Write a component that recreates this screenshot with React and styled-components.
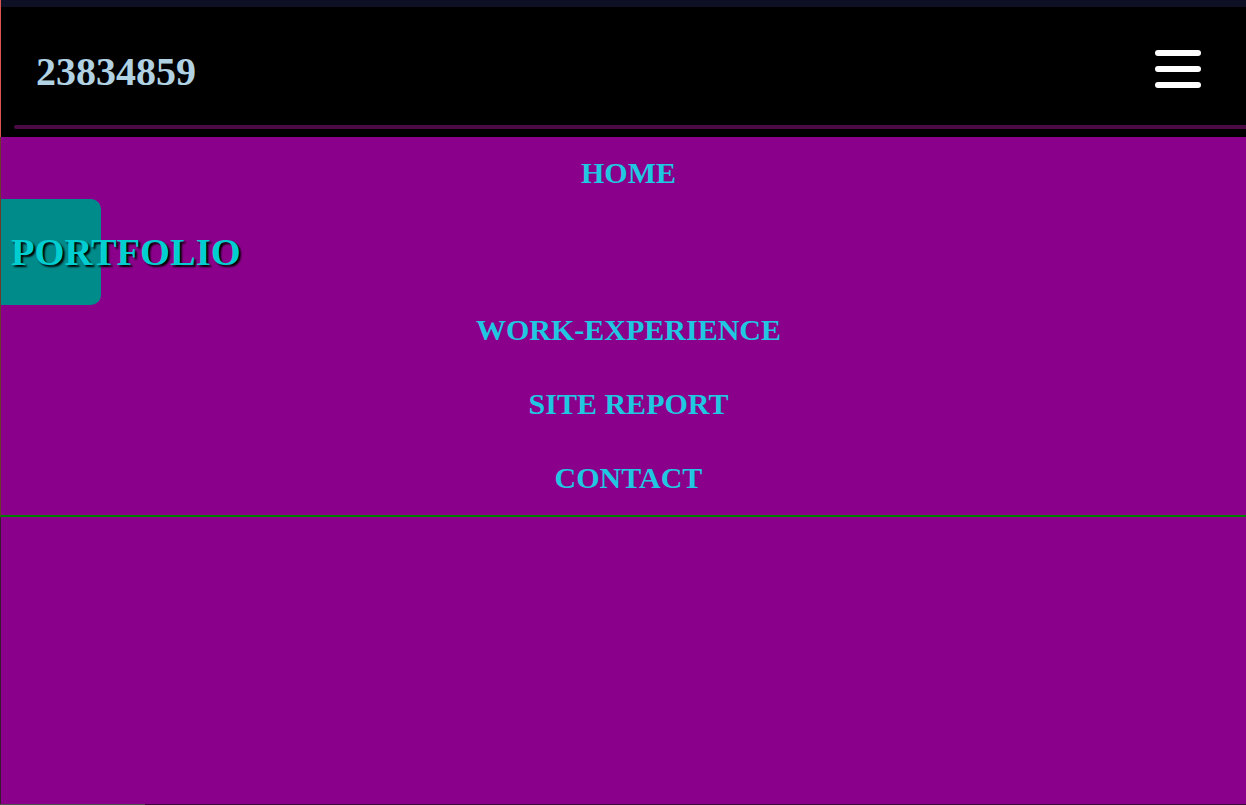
import React from "react";
import styled, { createGlobalStyle } from "styled-components";

const Global = createGlobalStyle`
  html, body { margin: 0; padding: 0; }
  body {
    background: #8b008b;
    font-family: "Liberation Serif", "Times New Roman", serif;
    overflow: hidden;
  }
  * { box-sizing: border-box; }
`;

const Page = styled.div`
  min-height: 805px;
  display: flex;
  flex-direction: column;
  background: #8b008b;
`;

const TopStrip = styled.div`
  height: 7px;
  background: #0e1126;
  border-left: 1px solid #d9534f;
`;

const Header = styled.header`
  background: #000;
  border-left: 1px solid #d9534f;
  padding-bottom: 8px;
`;

const HeaderRow = styled.div`
  display: flex;
  justify-content: space-between;
  align-items: flex-start;
  padding: 43px 45px 31px 35px;
`;

const Title = styled.h1`
  margin: 0;
  font-size: 40px;
  line-height: 44px;
  font-weight: bold;
  color: #b0d2e2;
`;

const Burger = styled.button`
  display: flex;
  flex-direction: column;
  gap: 10px;
  padding: 0;
  border: 0;
  background: none;
  cursor: pointer;
`;

const Bar = styled.span`
  display: block;
  width: 46px;
  height: 6px;
  border-radius: 3px;
  background: #fff;
`;

const Rule = styled.div`
  height: 4px;
  margin-left: 13px;
  background: #4b0c46;
  border-radius: 2px 0 0 2px;
`;

const Nav = styled.nav`
  display: flex;
  flex-direction: column;
  padding-bottom: 12px;
  border-left: 1px solid #6b3a2a;
  border-bottom: 2px solid #008000;
`;

const Item = styled.div`
  height: ${(p) => p.$h}px;
  margin-top: ${(p) => p.$mt || 0}px;
  padding-top: ${(p) => p.$pt || 0}px;
  padding-left: 10px;
  display: flex;
  align-items: center;
  justify-content: center;
`;

const Link = styled.a`
  font-size: 30px;
  font-weight: bold;
  color: #1fc7e1;
  text-decoration: none;
  white-space: nowrap;
`;

const ActiveItem = styled.div`
  height: 106px;
  width: 100px;
  display: flex;
  align-items: center;
  padding-left: 10px;
  background: #008b8b;
  border-radius: 0 10px 10px 0;
`;

const ActiveLink = styled.a`
  font-size: 38.5px;
  font-weight: bold;
  color: #00ced1;
  text-decoration: none;
  white-space: nowrap;
  text-shadow: 2px 2px 2px #000;
`;

const Main = styled.main`
  flex: 1;
  border-left: 1px solid #3a1a30;
`;

const Bottom = styled.div`
  height: 1px;
  display: flex;
  background: #3b0b3b;
`;

const Thumb = styled.div`
  width: 145px;
  background: #505050;
`;

export default function App() {
  return (
    <>
      <Global />
      <Page>
        <TopStrip />
        <Header>
          <HeaderRow>
            <Title>23834859</Title>
            <Burger aria-label="menu">
              <Bar />
              <Bar />
              <Bar />
            </Burger>
          </HeaderRow>
          <Rule />
        </Header>
        <Nav>
          <Item $h={62} $pt={10}>
            <Link href="#">HOME</Link>
          </Item>
          <ActiveItem>
            <ActiveLink href="#">PORTFOLIO</ActiveLink>
          </ActiveItem>
          <Item $h={50}>
            <Link href="#">WORK-EXPERIENCE</Link>
          </Item>
          <Item $h={50} $mt={24}>
            <Link href="#">SITE REPORT</Link>
          </Item>
          <Item $h={50} $mt={24}>
            <Link href="#">CONTACT</Link>
          </Item>
        </Nav>
        <Main />
        <Bottom>
          <Thumb />
        </Bottom>
      </Page>
    </>
  );
}
